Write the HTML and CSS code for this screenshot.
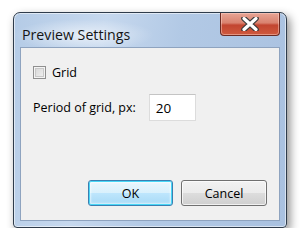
FILE: index.html
```html
<!DOCTYPE html>
<html lang="en">
  <head>
    <meta charset="UTF-8" />
    <title>Preview Settings</title>
    <link rel="stylesheet" href="styles.css">
  </head>
  <body>
    <div class="window">
      <div class="titlebar">
        <span class="title">Preview Settings</span>
        <span class="close">
          <svg width="20" height="14" viewBox="0 0 20 14">
            <path d="M4 1.5 L16 12.5 M16 1.5 L4 12.5" stroke="#3a3a3a" stroke-width="5.6" stroke-linecap="round"/>
            <path d="M4 1.5 L16 12.5 M16 1.5 L4 12.5" stroke="#ffffff" stroke-width="3.2" stroke-linecap="round"/>
          </svg>
        </span>
      </div>
      <div class="client">
        <label class="check"><span class="box"></span>Grid</label>
        <div class="field">
          <span>Period of grid, px:</span>
          <span class="input">20</span>
        </div>
        <div class="buttons">
          <span class="btn default">OK</span>
          <span class="btn">Cancel</span>
        </div>
      </div>
    </div>
  </body>
</html>
```

FILE: styles.css
```css
body {
  margin: 0;
  padding: 12px 0 0 13px;
  background: #ffffff;
  font-family: "Open Sans", "Noto Sans", sans-serif;
}

.window {
  box-sizing: border-box;
  width: 274px;
  height: 216px;
  border: 1px solid #2f3c4b;
  border-radius: 7px 7px 4px 4px;
  padding: 0 6px 6px 6px;
  display: flex;
  flex-direction: column;
  background: linear-gradient(100deg, #b4cbe6 0%, #c6d8ee 30%, #b2c9e5 55%, #a9c1e0 100%);
  box-shadow: inset 0 0 0 1px rgba(255, 255, 255, 0.55), 3px 4px 10px rgba(0, 0, 0, 0.45);
}

/* barra de titulo con el brillo blanco detras del texto */
.titlebar {
  height: 34px;
  display: flex;
  justify-content: space-between;
  align-items: flex-start;
  background: radial-gradient(ellipse 70px 16px at 70px 22px, rgba(255, 255, 255, 0.6), rgba(255, 255, 255, 0) 100%);
  margin: 0 -6px;
  padding: 0 6px 0 8px;
}

.title {
  font-size: 14.2px;
  color: #141414;
  line-height: 20px;
  margin-top: 12px;
}

.close {
  box-sizing: border-box;
  width: 60px;
  height: 23px;
  border: 1px solid #6b2a22;
  border-top: none;
  border-radius: 0 0 4px 4px;
  display: flex;
  justify-content: center;
  align-items: center;
  background: linear-gradient(#e8a595 0%, #d9826f 45%, #c24530 55%, #cf5a3e 100%);
  box-shadow: inset 0 0 0 1px rgba(255, 220, 210, 0.45);
}

.client {
  flex: 1;
  border: 1px solid #8ea3bf;
  background: #f0f0f0;
  padding: 18px 12px 14px 12px;
  display: flex;
  flex-direction: column;
  font-size: 12.5px;
  color: #000;
}

.check {
  display: flex;
  align-items: center;
  gap: 6px;
  height: 13px;
}

.box {
  box-sizing: border-box;
  width: 13px;
  height: 13px;
  border: 1px solid #8f8f8f;
  background: linear-gradient(135deg, #d4d4d4, #f4f4f4);
  box-shadow: inset 0 0 0 1px #f4f4f4, inset 0 0 0 2px #c8c8c8;
}

.field {
  display: flex;
  align-items: center;
  margin-top: 15px;
}

.input {
  box-sizing: border-box;
  width: 47px;
  height: 27px;
  margin-left: 13px;
  border: 1px solid #dcdcdc;
  border-top-color: #c4c4c4;
  background: #fff;
  padding: 0 6px;
  display: flex;
  align-items: center;
  font-size: 13.5px;
}

.buttons {
  margin-top: auto;
  display: flex;
  justify-content: flex-end;
  gap: 8px;
}

.btn {
  box-sizing: border-box;
  width: 86px;
  height: 26px;
  border: 1px solid #707070;
  border-radius: 3px;
  display: flex;
  justify-content: center;
  align-items: center;
  background: linear-gradient(#f2f2f2 0%, #ebebeb 50%, #dddddd 50%, #cfcfcf 100%);
  box-shadow: inset 0 0 0 1px rgba(255, 255, 255, 0.7);
}

.btn.default {
  width: 85px;
  border-color: #3c7fb1;
  background: linear-gradient(#eaf6fd 0%, #d9f0fc 50%, #bee6fd 50%, #a7d9f5 100%);
  box-shadow: inset 0 0 0 1px #48d7f7, inset 0 0 2px 2px rgba(255, 255, 255, 0.6);
}
```
